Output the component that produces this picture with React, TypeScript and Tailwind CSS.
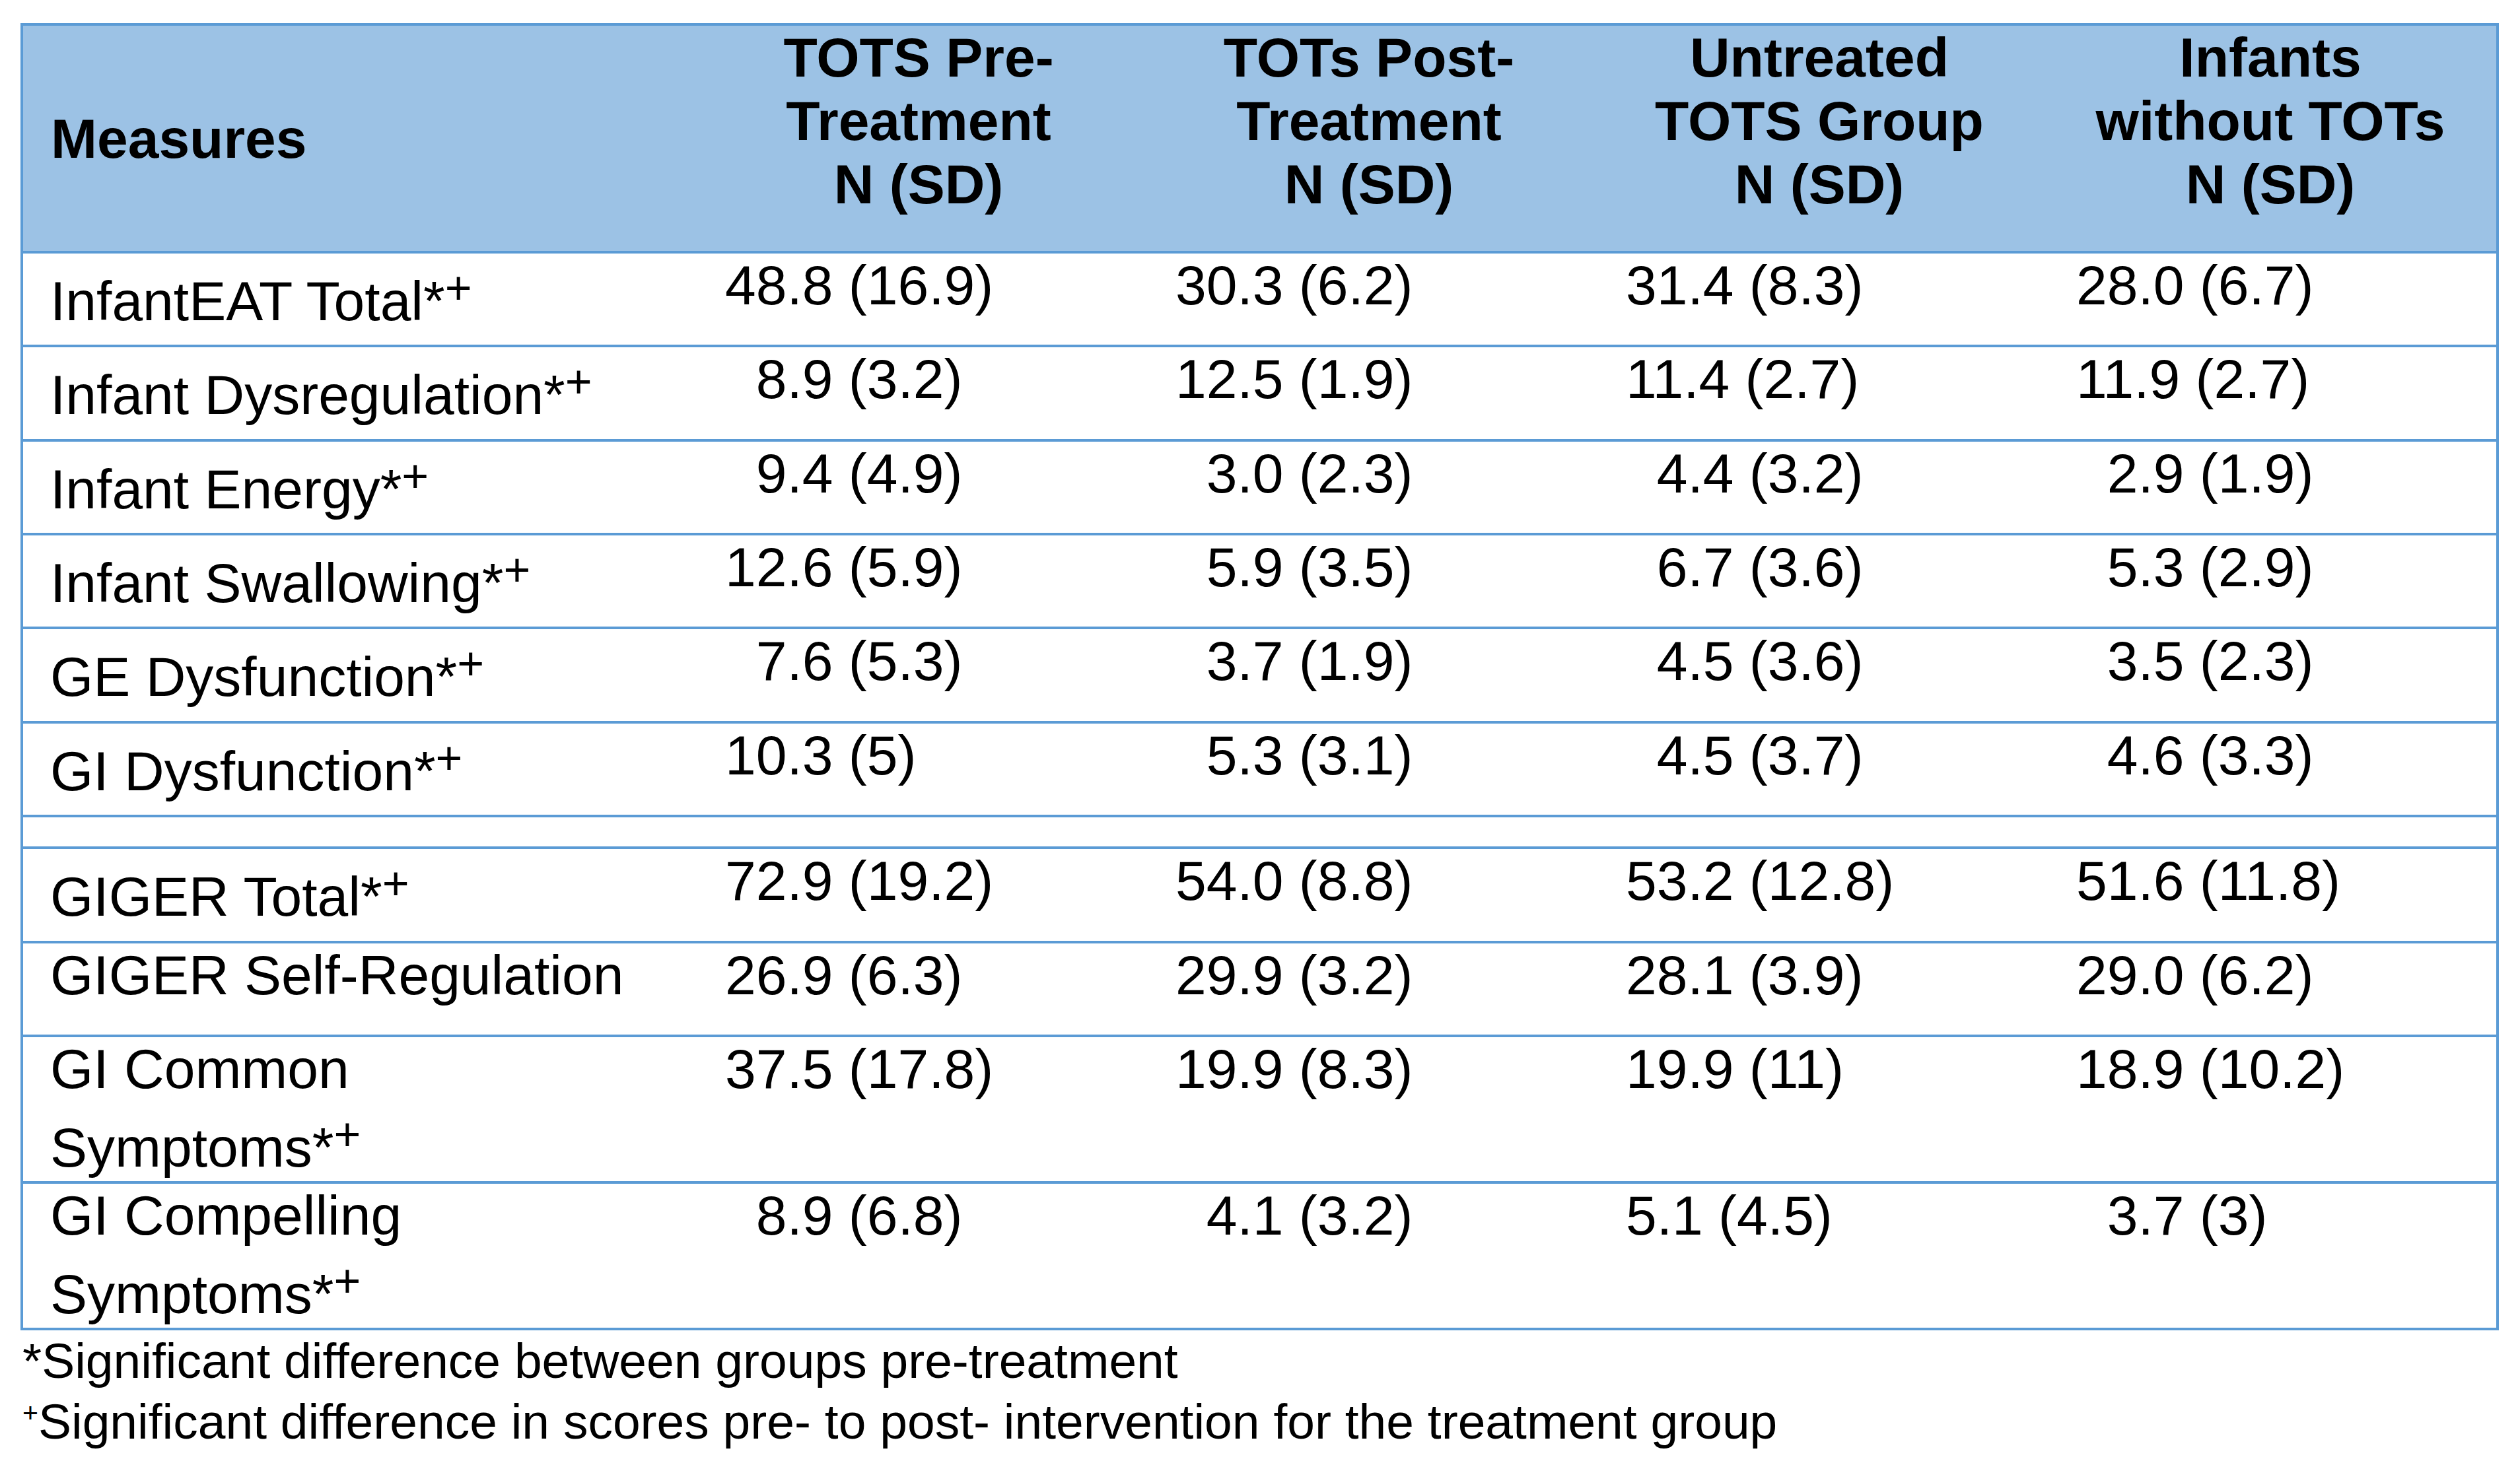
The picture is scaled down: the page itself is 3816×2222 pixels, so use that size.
type Row = {
  label: string[];
  // which label line carries the *+ marks (-1 = none)
  markLine: number;
  values: string[];
  height: string;
};

// a leading space in a value means "indent by one digit" so the decimals line up
const rows: Row[] = [
  { label: ["InfantEAT Total"], markLine: 0, values: ["48.8 (16.9)", "30.3 (6.2)", "31.4 (8.3)", "28.0 (6.7)"], height: "h-[142.33px]" },
  { label: ["Infant Dysregulation"], markLine: 0, values: [" 8.9 (3.2)", "12.5 (1.9)", "11.4 (2.7)", "11.9 (2.7)"], height: "h-[142.33px]" },
  { label: ["Infant Energy"], markLine: 0, values: [" 9.4 (4.9)", " 3.0 (2.3)", " 4.4 (3.2)", " 2.9 (1.9)"], height: "h-[142.33px]" },
  { label: ["Infant Swallowing"], markLine: 0, values: ["12.6 (5.9)", " 5.9 (3.5)", " 6.7 (3.6)", " 5.3 (2.9)"], height: "h-[142.33px]" },
  { label: ["GE Dysfunction"], markLine: 0, values: [" 7.6 (5.3)", " 3.7 (1.9)", " 4.5 (3.6)", " 3.5 (2.3)"], height: "h-[142.33px]" },
  { label: ["GI Dysfunction"], markLine: 0, values: ["10.3 (5)", " 5.3 (3.1)", " 4.5 (3.7)", " 4.6 (3.3)"], height: "h-[142.33px]" },
];

const rowsAfterGap: Row[] = [
  { label: ["GIGER Total"], markLine: 0, values: ["72.9 (19.2)", "54.0 (8.8)", "53.2 (12.8)", "51.6 (11.8)"], height: "h-[143px]" },
  { label: ["GIGER Self-Regulation"], markLine: -1, values: ["26.9 (6.3)", "29.9 (3.2)", "28.1 (3.9)", "29.0 (6.2)"], height: "h-[142px]" },
  { label: ["GI Common", "Symptoms"], markLine: 1, values: ["37.5 (17.8)", "19.9 (8.3)", "19.9 (11)", "18.9 (10.2)"], height: "h-[222px]" },
  { label: ["GI Compelling", "Symptoms"], markLine: 1, values: [" 8.9 (6.8)", " 4.1 (3.2)", "5.1 (4.5)", " 3.7 (3)"], height: "h-[222px]" },
];

const headers = [
  ["TOTS Pre-", "Treatment", "N (SD)"],
  ["TOTs Post-", "Treatment", "N (SD)"],
  ["Untreated", "TOTS Group", "N (SD)"],
  ["Infants", "without TOTs", "N (SD)"],
];

const gridCols = "grid grid-cols-[1015px_682px_682px_682px_684px]";

const Marks = () => (
  <>
    <span>*</span>
    <span className="relative top-[-25px] text-[70px] leading-none">+</span>
  </>
);

const DataRow = ({ row }: { row: Row }) => (
  <div className={`${gridCols} ${row.height} border-b-4 border-[#5b9bd5]`}>
    <div className="pl-[41px]">
      {row.label.map((line, i) => {
        // the raised marks push their own line down, as in the source document
        const pushed = i === row.markLine;
        return (
          <div key={line} className={pushed ? (i === 0 ? "pt-[24px]" : "mt-[23px]") : ""}>
            {line}
            {pushed && <Marks />}
          </div>
        );
      })}
    </div>
    {row.values.map((v, i) => (
      <div key={i} className="pl-[48px]">
        {v.startsWith(" ") ? <span className="pl-[0.556em]">{v.trim()}</span> : v}
      </div>
    ))}
  </div>
);

export default function App() {
  return (
    <div className="min-h-screen bg-white pl-[31px] pt-[35px] font-['Liberation_Sans',Arial,sans-serif] text-black">
      <div className="w-[3753px] border-x-4 border-t-4 border-[#5b9bd5] text-[84px] leading-[96px]">
        {/* header */}
        <div className={`${gridCols} h-[345px] border-b-4 border-[#5b9bd5] bg-[#9cc2e5] font-bold`}>
          <div className="flex items-center pl-[42px]">Measures</div>
          {headers.map((h) => (
            <div key={h[0]} className="text-center">
              {h.map((line) => (
                <div key={line}>{line}</div>
              ))}
            </div>
          ))}
        </div>

        {rows.map((r) => (
          <DataRow key={r.label.join(" ")} row={r} />
        ))}

        {/* empty separator row */}
        <div className="h-[48px] border-b-4 border-[#5b9bd5]" />

        {rowsAfterGap.map((r) => (
          <DataRow key={r.label.join(" ")} row={r} />
        ))}
      </div>

      {/* notes */}
      <div className="pl-[3px] text-[75px] leading-[92px]">
        <p>*Significant difference between groups pre-treatment</p>
        <p>
          <span className="relative top-[-25px] text-[41px] leading-none">+</span>
          Significant difference in scores pre- to post- intervention for the treatment group
        </p>
      </div>
    </div>
  );
}
